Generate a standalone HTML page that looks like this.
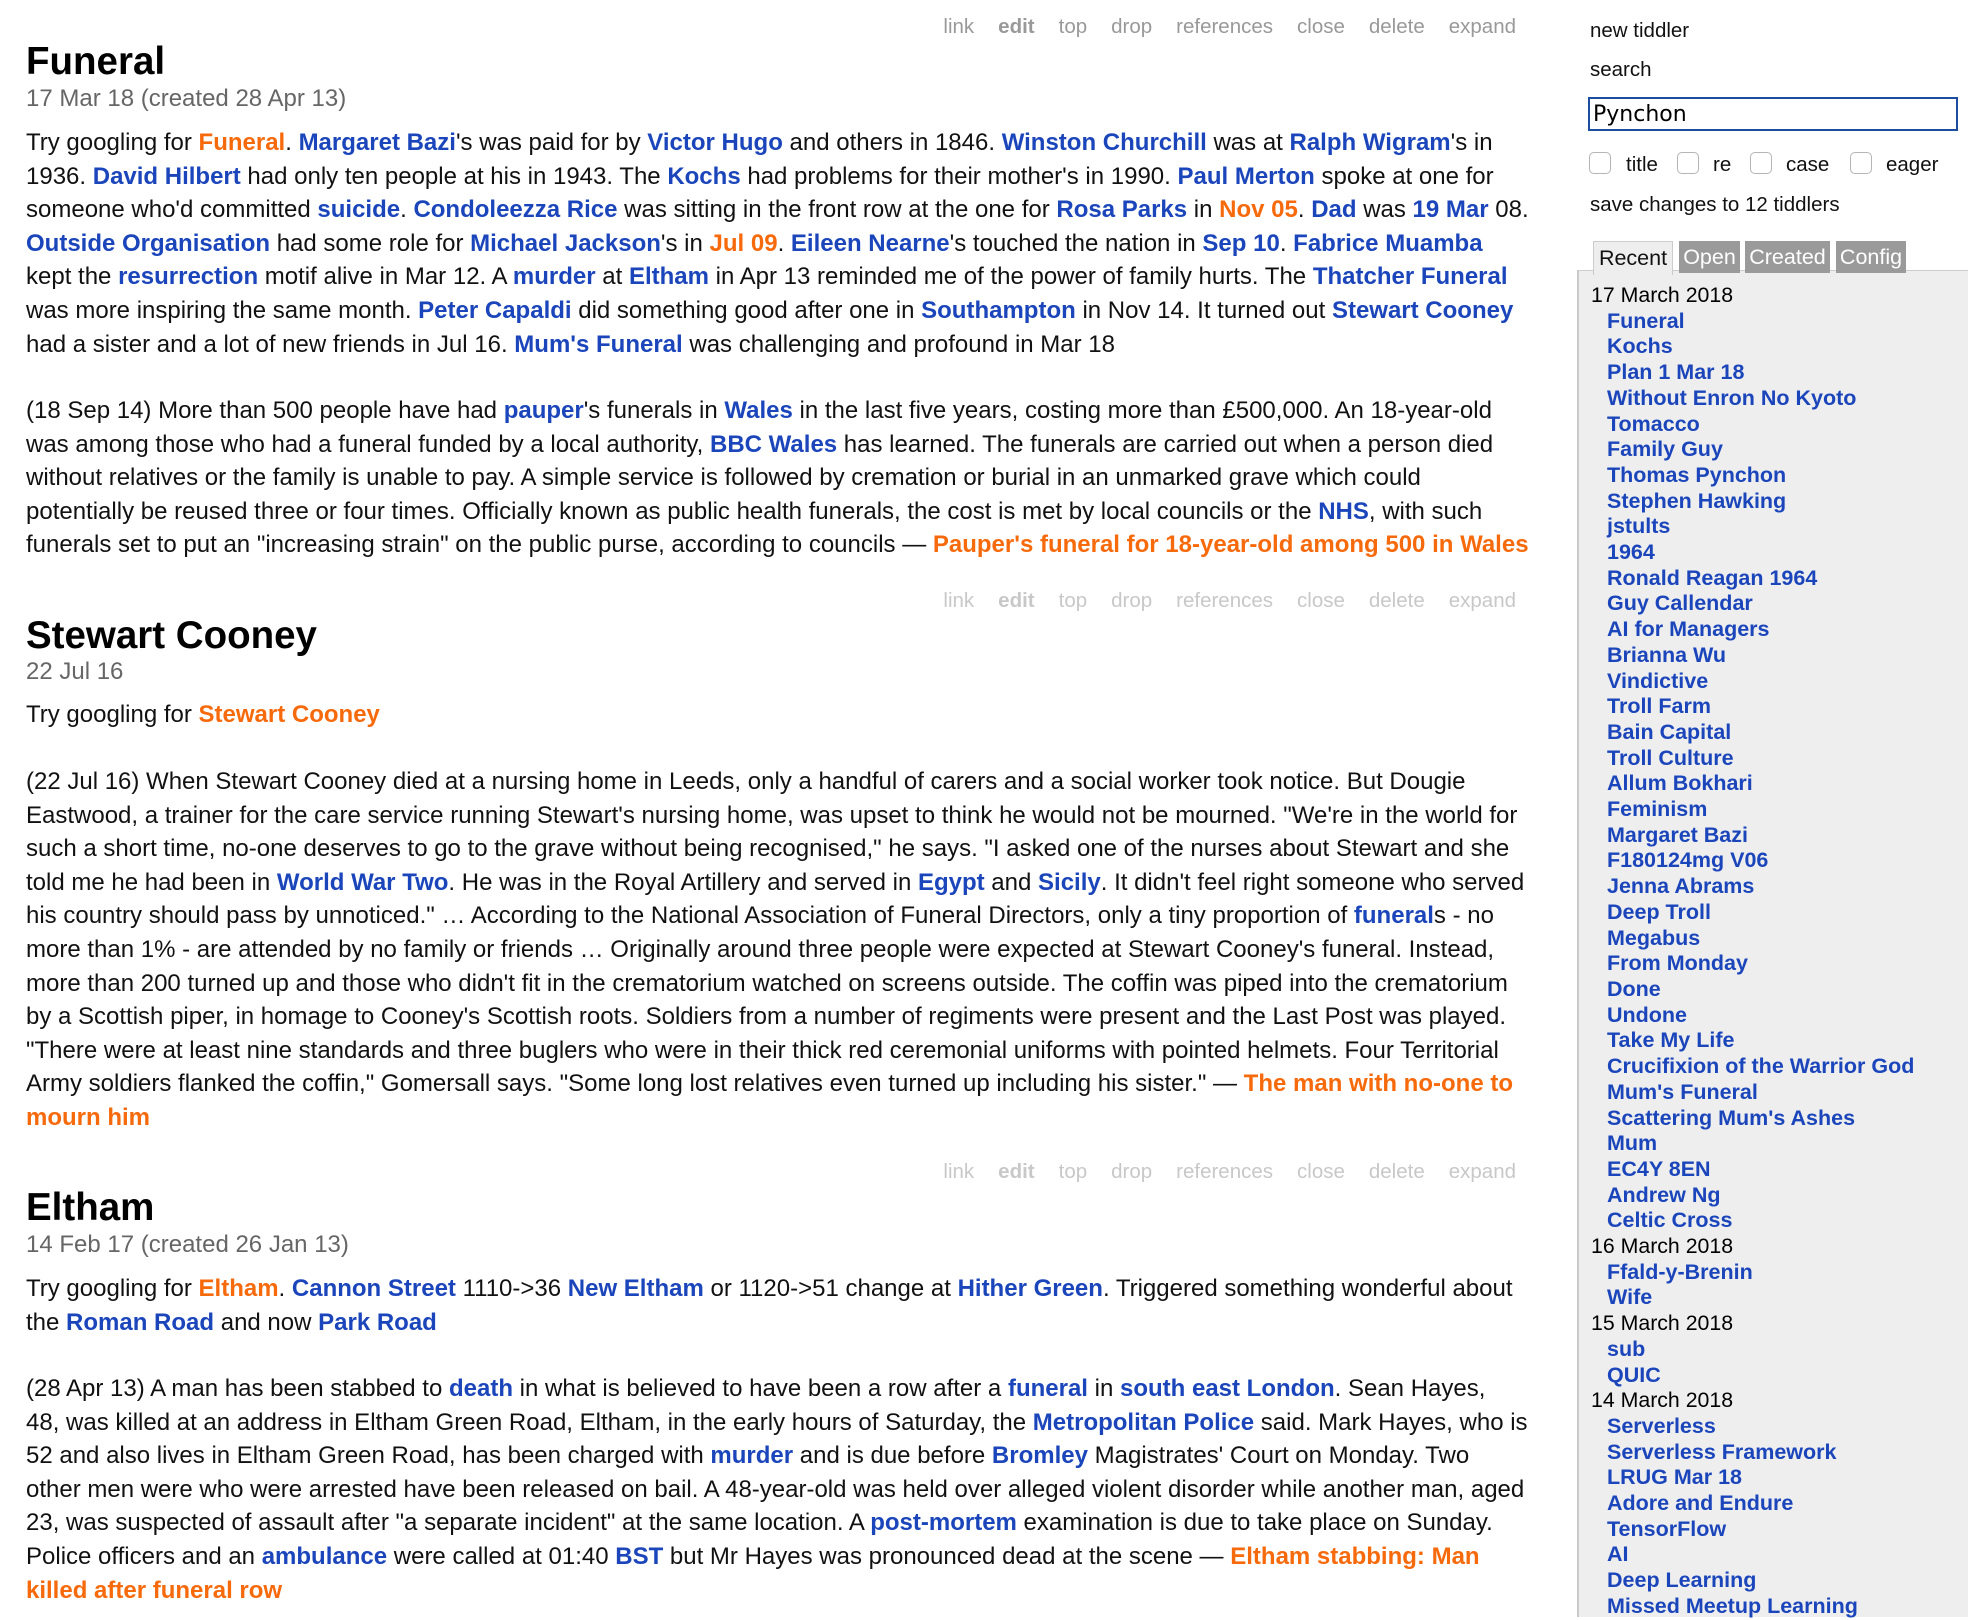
<!DOCTYPE html>
<html><head><meta charset="utf-8"><style>
html,body{margin:0;padding:0;width:1968px;height:1616px;overflow:hidden;background:#fff;font-family:"Liberation Sans",Arial,sans-serif;color:#000}
.a{position:absolute;white-space:nowrap}
.tb{right:452px;font-size:20.5px;line-height:28px;color:#c8c8c8;word-spacing:0}
.tb span{margin-left:24px}
.tb.d{color:#999}
.t{left:26px;font-size:38.5px;font-weight:bold;line-height:44px}
.dt{left:26px;font-size:24px;line-height:34px;color:#666}
.p{left:26px;font-size:24px;line-height:33.6px;color:#111}
b{color:#1b45bb}
i{font-style:normal;font-weight:bold;color:#f76a0c}
.sb{font-size:20.5px;color:#111;left:1590px}
.cb{position:absolute;top:152px;width:20px;height:20px;border:1.5px solid #b5b5b5;border-radius:5px;background:#fff}
.tab{position:absolute;top:241px;height:32px;background:#9a9a9a;color:#fff;font-size:21.5px;line-height:32px;text-align:center}
.list{left:1591px;top:283px;font-size:21.3px;line-height:25.7px}
.list b{display:block;margin-left:16px;font-size:21.5px}
</style></head><body>

<div class="a tb d" style="top:13px">link<span style="font-weight:bold">edit</span><span>top</span><span>drop</span><span>references</span><span>close</span><span>delete</span><span>expand</span></div>
<div class="a t" style="top:40px">Funeral</div>
<div class="a dt" style="top:82px">17 Mar 18 (created 28 Apr 13)</div>
<div class="a p" style="top:126px">Try googling for <i>Funeral</i>. <b>Margaret Bazi</b>'s was paid for by <b>Victor Hugo</b> and others in 1846. <b>Winston Churchill</b> was at <b>Ralph Wigram</b>'s in<br>1936. <b>David Hilbert</b> had only ten people at his in 1943. The <b>Kochs</b> had problems for their mother's in 1990. <b>Paul Merton</b> spoke at one for<br>someone who'd committed <b>suicide</b>. <b>Condoleezza Rice</b> was sitting in the front row at the one for <b>Rosa Parks</b> in <i>Nov 05</i>. <b>Dad</b> was <b>19 Mar</b> 08.<br><b>Outside Organisation</b> had some role for <b>Michael Jackson</b>'s in <i>Jul 09</i>. <b>Eileen Nearne</b>'s touched the nation in <b>Sep 10</b>. <b>Fabrice Muamba</b><br>kept the <b>resurrection</b> motif alive in Mar 12. A <b>murder</b> at <b>Eltham</b> in Apr 13 reminded me of the power of family hurts. The <b>Thatcher Funeral</b><br>was more inspiring the same month. <b>Peter Capaldi</b> did something good after one in <b>Southampton</b> in Nov 14. It turned out <b>Stewart Cooney</b><br>had a sister and a lot of new friends in Jul 16. <b>Mum's Funeral</b> was challenging and profound in Mar 18</div>
<div class="a p" style="top:394px">(18 Sep 14) More than 500 people have had <b>pauper</b>'s funerals in <b>Wales</b> in the last five years, costing more than £500,000. An 18-year-old<br>was among those who had a funeral funded by a local authority, <b>BBC Wales</b> has learned. The funerals are carried out when a person died<br>without relatives or the family is unable to pay. A simple service is followed by cremation or burial in an unmarked grave which could<br>potentially be reused three or four times. Officially known as public health funerals, the cost is met by local councils or the <b>NHS</b>, with such<br>funerals set to put an "increasing strain" on the public purse, according to councils — <i>Pauper's funeral for 18-year-old among 500 in Wales</i></div>

<div class="a tb" style="top:587px">link<span style="font-weight:bold">edit</span><span>top</span><span>drop</span><span>references</span><span>close</span><span>delete</span><span>expand</span></div>
<div class="a t" style="top:614px">Stewart Cooney</div>
<div class="a dt" style="top:655px">22 Jul 16</div>
<div class="a p" style="top:698px">Try googling for <i>Stewart Cooney</i></div>
<div class="a p" style="top:765px">(22 Jul 16) When Stewart Cooney died at a nursing home in Leeds, only a handful of carers and a social worker took notice. But Dougie<br>Eastwood, a trainer for the care service running Stewart's nursing home, was upset to think he would not be mourned. "We're in the world for<br>such a short time, no-one deserves to go to the grave without being recognised," he says. "I asked one of the nurses about Stewart and she<br>told me he had been in <b>World War Two</b>. He was in the Royal Artillery and served in <b>Egypt</b> and <b>Sicily</b>. It didn't feel right someone who served<br>his country should pass by unnoticed." … According to the National Association of Funeral Directors, only a tiny proportion of <b>funeral</b>s - no<br>more than 1% - are attended by no family or friends … Originally around three people were expected at Stewart Cooney's funeral. Instead,<br>more than 200 turned up and those who didn't fit in the crematorium watched on screens outside. The coffin was piped into the crematorium<br>by a Scottish piper, in homage to Cooney's Scottish roots. Soldiers from a number of regiments were present and the Last Post was played.<br>"There were at least nine standards and three buglers who were in their thick red ceremonial uniforms with pointed helmets. Four Territorial<br>Army soldiers flanked the coffin," Gomersall says. "Some long lost relatives even turned up including his sister." — <i>The man with no-one to</i><br><i>mourn him</i></div>

<div class="a tb" style="top:1158px">link<span style="font-weight:bold">edit</span><span>top</span><span>drop</span><span>references</span><span>close</span><span>delete</span><span>expand</span></div>
<div class="a t" style="top:1186px">Eltham</div>
<div class="a dt" style="top:1228px">14 Feb 17 (created 26 Jan 13)</div>
<div class="a p" style="top:1272px">Try googling for <i>Eltham</i>. <b>Cannon Street</b> 1110-&gt;36 <b>New Eltham</b> or 1120-&gt;51 change at <b>Hither Green</b>. Triggered something wonderful about<br>the <b>Roman Road</b> and now <b>Park Road</b></div>
<div class="a p" style="top:1372px">(28 Apr 13) A man has been stabbed to <b>death</b> in what is believed to have been a row after a <b>funeral</b> in <b>south east London</b>. Sean Hayes,<br>48, was killed at an address in Eltham Green Road, Eltham, in the early hours of Saturday, the <b>Metropolitan Police</b> said. Mark Hayes, who is<br>52 and also lives in Eltham Green Road, has been charged with <b>murder</b> and is due before <b>Bromley</b> Magistrates' Court on Monday. Two<br>other men were who were arrested have been released on bail. A 48-year-old was held over alleged violent disorder while another man, aged<br>23, was suspected of assault after "a separate incident" at the same location. A <b>post-mortem</b> examination is due to take place on Sunday.<br>Police officers and an <b>ambulance</b> were called at 01:40 <b>BST</b> but Mr Hayes was pronounced dead at the scene — <i>Eltham stabbing: Man</i><br><i>killed after funeral row</i></div>

<!-- sidebar -->
<div class="a sb" style="top:17px;line-height:28px">new tiddler</div>
<div class="a sb" style="top:56px;line-height:28px">search</div>
<div style="position:absolute;left:1588px;top:97px;width:366px;height:30px;border:2px solid #1c4da1;background:#fff"></div>
<div class="a" style="left:1593px;top:100px;font-size:22px;line-height:30px;font-family:'DejaVu Sans','Liberation Sans',sans-serif">Pynchon</div>
<div class="cb" style="left:1589px"></div><div class="a sb" style="left:1626px;top:151px;line-height:28px">title</div>
<div class="cb" style="left:1677px"></div><div class="a sb" style="left:1713px;top:151px;line-height:28px">re</div>
<div class="cb" style="left:1750px"></div><div class="a sb" style="left:1786px;top:151px;line-height:28px">case</div>
<div class="cb" style="left:1850px"></div><div class="a sb" style="left:1886px;top:151px;line-height:28px">eager</div>
<div class="a sb" style="top:191px;line-height:28px">save changes to 12 tiddlers</div>

<div style="position:absolute;left:1577px;top:270px;width:391px;height:1346px;background:#eee;border-left:2px solid #c9c9c9;border-top:1px solid #ccc"></div>
<div class="tab" style="left:1593px;width:78px;background:#eee;color:#111;border:1px solid #ccc;border-bottom:none;height:33px">Recent</div>
<div class="tab" style="left:1679px;width:61px">Open</div>
<div class="tab" style="left:1745px;width:85px">Created</div>
<div class="tab" style="left:1836px;width:70px">Config</div>

<div class="a list">17 March 2018
<b>Funeral</b><b>Kochs</b><b>Plan 1 Mar 18</b><b>Without Enron No Kyoto</b><b>Tomacco</b><b>Family Guy</b><b>Thomas Pynchon</b><b>Stephen Hawking</b><b>jstults</b><b>1964</b><b>Ronald Reagan 1964</b><b>Guy Callendar</b><b>AI for Managers</b><b>Brianna Wu</b><b>Vindictive</b><b>Troll Farm</b><b>Bain Capital</b><b>Troll Culture</b><b>Allum Bokhari</b><b>Feminism</b><b>Margaret Bazi</b><b>F180124mg V06</b><b>Jenna Abrams</b><b>Deep Troll</b><b>Megabus</b><b>From Monday</b><b>Done</b><b>Undone</b><b>Take My Life</b><b>Crucifixion of the Warrior God</b><b>Mum's Funeral</b><b>Scattering Mum's Ashes</b><b>Mum</b><b>EC4Y 8EN</b><b>Andrew Ng</b><b>Celtic Cross</b>16 March 2018
<b>Ffald-y-Brenin</b><b>Wife</b>15 March 2018
<b>sub</b><b>QUIC</b>14 March 2018
<b>Serverless</b><b>Serverless Framework</b><b>LRUG Mar 18</b><b>Adore and Endure</b><b>TensorFlow</b><b>AI</b><b>Deep Learning</b><b>Missed Meetup Learning</b></div>
</body></html>
